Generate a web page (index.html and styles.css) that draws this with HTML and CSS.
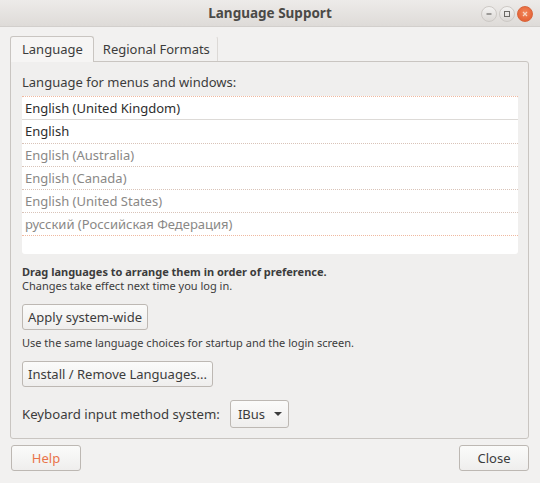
FILE: index.html
```html
<!DOCTYPE html>
<html lang="en">
<head>
    <meta charset="UTF-8">
    <title>Language Support</title>
    <link rel="stylesheet" href="styles.css">
</head>
<body>
    <div class="window">
        <header class="titlebar">
            <span class="title">Language Support</span>
            <div class="wm-buttons">
                <span class="wm-btn">
                    <svg width="10" height="10" viewBox="0 0 10 10"><path d="M2.5 5h5" stroke="#6a6864" stroke-width="1.2"/></svg>
                </span>
                <span class="wm-btn">
                    <svg width="10" height="10" viewBox="0 0 10 10"><rect x="2.5" y="2.5" width="5" height="5" fill="none" stroke="#6a6864" stroke-width="1"/></svg>
                </span>
                <span class="wm-btn close">
                    <svg width="10" height="10" viewBox="0 0 10 10"><path d="M3 3l4 4M7 3l-4 4" stroke="#f6d5c4" stroke-width="1.2"/></svg>
                </span>
            </div>
        </header>

        <div class="content">
            <div class="tabs">
                <span class="tab active">Language</span>
                <span class="tab">Regional Formats</span>
            </div>

            <section class="notebook">
                <p class="label">Language for menus and windows:</p>
                <ul class="lang-list">
                    <li class="first">English (United Kingdom)</li>
                    <li class="second">English</li>
                    <li class="dim">English (Australia)</li>
                    <li class="dim">English (Canada)</li>
                    <li class="dim">English (United States)</li>
                    <li class="dim">русский (Российская Федерация)</li>
                    <li class="empty"></li>
                </ul>

                <p class="hint"><b>Drag languages to arrange them in order of preference.</b><br>Changes take effect next time you log in.</p>

                <button class="btn">Apply system-wide</button>
                <p class="hint">Use the same language choices for startup and the login screen.</p>

                <button class="btn">Install / Remove Languages...</button>

                <div class="im-row">
                    <span>Keyboard input method system:</span>
                    <button class="btn combo">IBus <span class="arrow"></span></button>
                </div>
            </section>

            <footer class="actions">
                <button class="btn help">Help</button>
                <button class="btn close-btn">Close</button>
            </footer>
        </div>
    </div>
</body>
</html>
```

FILE: styles.css
```css
:root {
    --bg: #f2f1f0;
    --text: #3c3c3c;
    --border: #c9c5c1;
    --orange: #e9744a;
}

body {
    margin: 0;
    background: var(--bg);
    font-family: 'Noto Sans', 'Open Sans', sans-serif;
    color: var(--text);
    font-size: 13px;
}

.window {
    width: 540px;
    height: 483px;
    display: flex;
    flex-direction: column;
    background: var(--bg);
}

.titlebar {
    height: 27px;
    flex: none;
    display: flex;
    align-items: center;
    justify-content: center;
    position: relative;
    background: linear-gradient(#edebe9, #dedbd8);
    border-bottom: 1px solid #d2cfcc;
    box-sizing: border-box;
}

.title {
    font-weight: bold;
    font-size: 13.5px;
    color: #4b4a47;
}

.wm-buttons {
    position: absolute;
    right: 7px;
    top: 6px;
    display: flex;
    gap: 2px;
}

.wm-btn {
    width: 14px;
    height: 14px;
    border-radius: 50%;
    background: linear-gradient(#f4f3f2, #dcd9d6);
    border: 1px solid #cdc9c5;
    display: flex;
    align-items: center;
    justify-content: center;
}

.wm-btn.close {
    background: radial-gradient(circle at 50% 40%, #f3875a, #e0562a);
    border-color: #d8653c;
}

.content {
    flex: 1;
    padding: 9px 11px 0 10px;
    display: flex;
    flex-direction: column;
}

.tabs {
    display: flex;
    height: 26px;
}

.tab {
    padding: 0 7px 0 8px;
    line-height: 25px;
    border: 1px solid transparent;
    border-bottom: none;
    border-radius: 3px 3px 0 0;
}

.tab.active {
    background: #f6f5f4;
    border-color: var(--border);
    position: relative;
    z-index: 1;
    padding: 0 10px 0 11px;
}

.tab:not(.active) {
    border-right-color: #dcd9d6;
}

.notebook {
    height: 378px;
    box-sizing: border-box;
    border: 1px solid var(--border);
    border-radius: 0 3px 3px 3px;
    background: #f0efee;
    margin-top: -1px;
    padding: 8px 10px 0 11px;
}

.label {
    margin: 2px 0 4px;
    line-height: 20px;
}

.lang-list {
    list-style: none;
    margin: 0;
    padding: 0;
    background: #fff;
    border-radius: 3px;
}

.lang-list li {
    height: 23px;
    line-height: 22px;
    padding-left: 3px;
    color: #2e2e2e;
    border-top: 1px dotted #f0b9a0;
    box-sizing: border-box;
}

.lang-list li.first {
    border-bottom: 1px solid #dddad7;
    height: 24px;
}

.lang-list li.second {
    border-top: none;
    line-height: 23px;
}

.lang-list li.dim {
    color: #8a8886;
    border-top-color: #d9c3b8;
}

.lang-list li.empty {
    height: 19px;
}

.hint {
    margin: 11px 0 0;
    font-size: 11px;
    line-height: 14px;
}

.btn {
    font-family: inherit;
    font-size: 13px;
    color: var(--text);
    background: linear-gradient(#fbfbfa, #efeeed);
    border: 1px solid #bdb8b3;
    border-radius: 3px;
    height: 26px;
    padding: 0 5px;
    margin-top: 11px;
    display: block;
}

.btn + .hint {
    margin-top: 6px;
}

.im-row {
    display: flex;
    align-items: center;
    margin-top: 13px;
    gap: 10px;
    font-size: 13.2px;
}

.combo {
    margin-top: 0;
    height: 28px;
    padding: 0 6px 0 7px;
    display: flex;
    align-items: center;
    gap: 9px;
}

.arrow {
    width: 0;
    height: 0;
    border-left: 4px solid transparent;
    border-right: 4px solid transparent;
    border-top: 4px solid #3c3c3c;
}

.actions {
    display: flex;
    justify-content: space-between;
    margin-top: 6px;
    padding-left: 1px;
}

.actions .btn {
    margin-top: 0;
    width: 70px;
    height: 26px;
}

.help {
    color: var(--orange);
}
```
